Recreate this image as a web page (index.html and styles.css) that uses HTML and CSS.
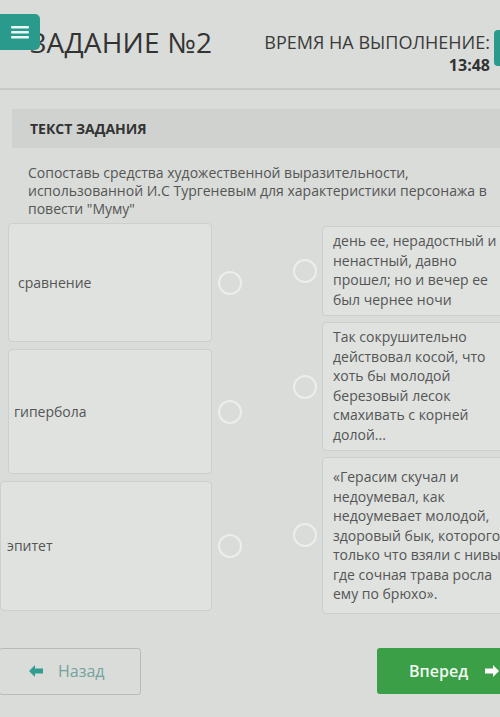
FILE: index.html
```html
<!DOCTYPE html>
<html lang="ru">
<head>
    <meta charset="UTF-8">
    <meta name="viewport" content="width=device-width, initial-scale=1.0">
    <title>Задание №2</title>
    <link rel="stylesheet" href="styles.css">
</head>
<body>
    <div class="page">
        <div class="topbar">
            <div class="title-wrap">
                <button class="menu-btn" aria-label="Меню">
                    <svg width="20" height="16" viewBox="0 0 20 16"><rect x="1" y="2" width="18" height="2.6" rx="1" fill="#e8f5f3"/><rect x="1" y="7" width="18" height="2.6" rx="1" fill="#e8f5f3"/><rect x="1" y="12" width="18" height="2.6" rx="1" fill="#e8f5f3"/></svg>
                </button>
                <h1 class="task-title">ЗАДАНИЕ №2</h1>
            </div>
            <div class="timer">
                <div class="timer-label">ВРЕМЯ НА ВЫПОЛНЕНИЕ:</div>
                <div class="timer-value">13:48</div>
            </div>
            <div class="finish-btn"></div>
        </div>

        <div class="section-head">ТЕКСТ ЗАДАНИЯ</div>
        <p class="question">Сопоставь средства художественной выразительности, использованной И.С Тургеневым для характеристики персонажа в повести "Муму"</p>

        <div class="match">
            <div class="col-left">
                <div class="row-left">
                    <div class="card card-l1">сравнение</div>
                    <span class="dot"></span>
                </div>
                <div class="row-left">
                    <div class="card card-l2">гипербола</div>
                    <span class="dot"></span>
                </div>
                <div class="row-left">
                    <div class="card card-l3">эпитет</div>
                    <span class="dot"></span>
                </div>
            </div>
            <div class="col-right">
                <div class="row-right">
                    <span class="dot"></span>
                    <div class="card card-r">день ее, нерадостный и ненастный, давно прошел; но и вечер ее был чернее ночи</div>
                </div>
                <div class="row-right">
                    <span class="dot"></span>
                    <div class="card card-r">Так сокрушительно действовал косой, что хоть бы молодой березовый лесок смахивать с корней долой...</div>
                </div>
                <div class="row-right">
                    <span class="dot"></span>
                    <div class="card card-r card-r3">«Герасим скучал и недоумевал, как недоумевает молодой, здоровый бык, которого только что взяли с нивы, где сочная трава росла ему по брюхо».</div>
                </div>
            </div>
        </div>

        <div class="nav">
            <button class="btn-back">
                <svg width="16" height="14" viewBox="0 0 16 14"><path d="M7 1 L1 7 L7 13 L7 9.5 L15 9.5 L15 4.5 L7 4.5 Z" fill="#2f9e91"/></svg>
                <span>Назад</span>
            </button>
            <button class="btn-next">
                <span>Вперед</span>
                <svg width="16" height="14" viewBox="0 0 16 14"><path d="M9 1 L15 7 L9 13 L9 9.5 L1 9.5 L1 4.5 L9 4.5 Z" fill="#ffffff"/></svg>
            </button>
        </div>
    </div>
</body>
</html>
```

FILE: styles.css
```css
body { margin: 0; background: #d9dcd9; font-family: "Open Sans", "DejaVu Sans", sans-serif; color: #555; overflow: hidden; }
.page { width: 540px; }

.topbar { display: flex; align-items: flex-start; height: 88px; border-bottom: 2px solid #c6c9c6; }
.title-wrap { display: flex; align-items: flex-start; width: 262px; }
.menu-btn { position: relative; z-index: 1; width: 40px; height: 36px; margin-top: 14px; border: none; border-radius: 0 5px 5px 0; background: #2a9a8c; display: flex; align-items: center; justify-content: center; padding: 0; }
.task-title { margin: 23px 0 0 -10px; font-size: 28px; font-weight: 400; color: #333; letter-spacing: 0.2px; }
.timer { margin-top: 31px; text-align: right; width: 228px; }
.timer-label { font-size: 18px; color: #3a3a3a; line-height: 22px; white-space: nowrap; }
.timer-value { font-size: 16px; font-weight: 700; color: #333; line-height: 24px; }
.finish-btn { margin: 30px 0 0 4px; width: 30px; height: 36px; border-radius: 4px; background: #2a9a8c; }

.section-head { margin: 19px 0 0 12px; height: 39px; line-height: 39px; padding-left: 18px; background: #cfd2cf; font-size: 14px; font-weight: 700; color: #333; }
.question { margin: 16px 0 0 28px; width: 475px; font-size: 14px; line-height: 18px; color: #555; }

.match { display: flex; margin-top: 3px; }
.col-left { display: flex; flex-direction: column; gap: 7px; padding-left: 8px; padding-top: 2px; }
.row-left { display: flex; align-items: center; gap: 6px; }
.col-right { display: flex; flex-direction: column; gap: 6px; margin-left: 51px; padding-top: 5px; }
.row-right { display: flex; align-items: center; gap: 5px; }

.card { background: #dfe2df; border: 1px solid #ccd0cc; border-radius: 4px; font-size: 14px; line-height: 19.5px; color: #555; box-sizing: border-box; }
.card-l1, .card-l2, .card-l3 { width: 204px; display: flex; align-items: center; padding-left: 9px; }
.card-l1 { height: 119px; }
.card-l2 { height: 125px; padding-left: 5px; }
.card-l3 { height: 130px; padding-left: 6px; margin-left: -8px; width: 212px; }
.card-r { width: 200px; padding: 4px 12px 6px 10px; }
.card-r3 { padding: 9px 12px 9px 10px; }

.dot { width: 20px; height: 20px; border: 2px solid #eceeec; border-radius: 50%; flex-shrink: 0; }

.nav { display: flex; justify-content: space-between; margin-top: 34px; width: 540px; }
.btn-back { display: flex; align-items: center; gap: 14px; width: 142px; height: 47px; margin-left: -1px; padding-left: 28px; border: 1px solid #b8bcb8; border-radius: 3px; background: #d9dcd9; font-family: inherit; font-size: 16px; color: #74a29d; }
.btn-next { display: flex; align-items: center; gap: 16px; width: 163px; height: 46px; padding-left: 32px; border: none; border-radius: 3px; background: #3a9f47; font-family: inherit; font-size: 16px; font-weight: 600; color: #f2f8f2; }
```
